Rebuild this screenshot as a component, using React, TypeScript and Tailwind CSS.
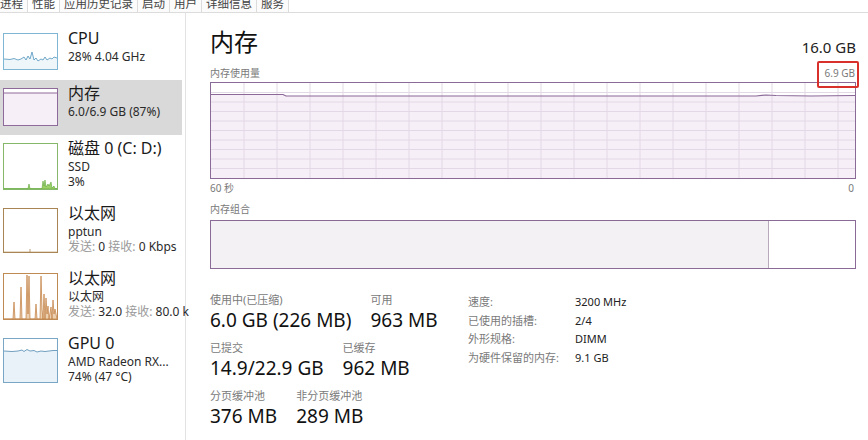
import type { ReactNode } from 'react'

const tabs = ['进程', '性能', '应用历史记录', '启动', '用户', '详细信息', '服务']

function Thumb({ h, border, children }: { h: number; border: string; children: ReactNode }) {
  return (
    <div className={`w-[55px] shrink-0 border ${border} bg-white`} style={{ height: h }}>
      <svg width="100%" height="100%" viewBox={`0 0 53 ${h - 2}`} preserveAspectRatio="none">
        {children}
      </svg>
    </div>
  )
}

function SideItem({
  height,
  thumb,
  title,
  lines,
  selected,
}: {
  height: number
  thumb: ReactNode
  title: string
  lines: ReactNode[]
  selected?: boolean
}) {
  return (
    <div
      className={`flex w-[182px] gap-[10px] pl-[3px] pt-[8px] ${selected ? 'bg-[#d9d9d9]' : ''}`}
      style={{ height }}
    >
      {thumb}
      <div className="-mt-[5px] min-w-0 whitespace-nowrap">
        <div className="text-[16px] leading-[21px] text-[#1a1a1a]">{title}</div>
        {lines.map((l, i) => (
          <div key={i} className="text-[12px] leading-[15px] text-[#2a2a2a]">
            {l}
          </div>
        ))}
      </div>
    </div>
  )
}

function MemGraph() {
  const cols = Array.from({ length: 20 }, (_, i) => (i + 1) * 33)
  const rows = Array.from({ length: 9 }, (_, i) => (i + 1) * 9.5)
  const line = 'M0 11.5 L72 11.5 L75 13 L545 13 L555 12 L565 12.5 L600 13 L644 12.5'
  return (
    <svg width="100%" height="100%" viewBox="0 0 644 95" preserveAspectRatio="none">
      <path d={`${line} L644 95 L0 95 Z`} fill="#f6eff7" />
      {cols.map((x) => (
        <line key={x} x1={x} y1={0} x2={x} y2={95} stroke="#e3d8e5" strokeWidth="1" />
      ))}
      {rows.map((y) => (
        <line key={y} x1={0} y1={y} x2={644} y2={y} stroke="#e3d8e5" strokeWidth="1" />
      ))}
      <path d={line} fill="none" stroke="#8b6898" strokeWidth="1.2" />
    </svg>
  )
}

export default function App() {
  return (
    <div className="relative h-[440px] w-[868px] overflow-hidden bg-white font-['Noto_Sans','Noto_Sans_CJK_SC',sans-serif] text-[#1a1a1a]">
      {/* tabs */}
      <div className="flex h-[13px] overflow-hidden border-b border-[#dcdcdc]">
        {tabs.map((t, i) => (
          <div
            key={t}
            className={`-mt-[4px] whitespace-nowrap border-r border-[#dcdcdc] px-[4px] text-[11.5px] leading-[16px] text-[#444] ${
              i === 0 ? 'pl-0' : ''
            } ${i === 1 ? 'bg-white' : 'bg-[#fbfbfb]'}`}
          >
            {t}
          </div>
        ))}
      </div>

      <div className="flex h-[427px]">
        {/* sidebar */}
        <div className="w-[186px] shrink-0 border-r border-[#e2e2e2] pt-[12px]">
          <SideItem
            height={55}
            title="CPU"
            lines={['28% 4.04 GHz']}
            thumb={
              <Thumb h={37} border="border-[#7fb6d3]">
                <path
                  d="M0 25 L6 25.5 L10 24.5 L14 26 L17 25 L20 23 L22 26 L24 22 L26 25 L28 18 L30 26 L32 24 L34 27 L37 25 L39 26 L41 23 L43 26 L46 24 L48 25 L50 23 L53 24 L53 35 L0 35 Z"
                  fill="#eef6fa"
                />
                <path
                  d="M0 25 L6 25.5 L10 24.5 L14 26 L17 25 L20 23 L22 26 L24 22 L26 25 L28 18 L30 26 L32 24 L34 27 L37 25 L39 26 L41 23 L43 26 L46 24 L48 25 L50 23 L53 24"
                  fill="none"
                  stroke="#4f94bd"
                  strokeWidth="0.8"
                />
              </Thumb>
            }
          />
          <SideItem
            height={55}
            selected
            title="内存"
            lines={['6.0/6.9 GB (87%)']}
            thumb={
              <Thumb h={38} border="border-[#8d6a9a]">
                <rect x="0" y="4" width="53" height="32" fill="#f7eff7" />
                <line x1="0" y1="4" x2="53" y2="4" stroke="#8d6a9a" strokeWidth="1" />
              </Thumb>
            }
          />
          <SideItem
            height={65}
            title="磁盘 0 (C: D:)"
            lines={['SSD', '3%']}
            thumb={
              <Thumb h={47} border="border-[#86b86a]">
                <path
                  d="M0 44.5 L24 44.5 L25 40 L26 44.5 L38 44.5 L39 37 L40 42 L41 36 L42 43 L44 40 L45 42 L47 38 L48 44 L50 42 L51 44.5 L53 44.5 L53 45 L0 45 Z"
                  fill="#9bd068"
                  stroke="#5ea63a"
                  strokeWidth="0.6"
                />
              </Thumb>
            }
          />
          <SideItem
            height={65}
            title="以太网"
            lines={[
              'pptun',
              <>
                <span className="text-[#9a9a9a]">发送:</span> 0 <span className="text-[#9a9a9a]">接收:</span> 0 Kbps
              </>,
            ]}
            thumb={
              <Thumb h={45} border="border-[#a98556]">
                <line x1="0" y1="42.5" x2="53" y2="42.5" stroke="#d9c5a8" strokeWidth="0.6" />
                <line x1="26" y1="40" x2="26" y2="43" stroke="#a98556" strokeWidth="0.8" />
              </Thumb>
            }
          />
          <SideItem
            height={65}
            title="以太网"
            lines={[
              '以太网',
              <>
                <span className="text-[#9a9a9a]">发送:</span> 32.0 <span className="text-[#9a9a9a]">接收:</span> 80.0 k
              </>,
            ]}
            thumb={
              <Thumb h={47} border="border-[#c08a55]">
                <path
                  d="M0 45 L9 45 L10 28 L11 45 L16 45 L17 13 L18 45 L22 45 L23 1 L24 40 L25 2 L26 45 L31 45 L32 30 L33 45 L36 45 L37 2 L38 35 L39 45 L40 20 L41 45 L42 24 L43 40 L44 32 L45 45 L47 33 L48 45 L49 26 L50 40 L51 35 L53 45 Z"
                  fill="#ecd0b2"
                  stroke="#c07b3c"
                  strokeWidth="0.7"
                />
              </Thumb>
            }
          />
          <SideItem
            height={65}
            title="GPU 0"
            lines={['AMD Radeon RX...', '74% (47 °C)']}
            thumb={
              <Thumb h={45} border="border-[#7aa6c6]">
                <path
                  d="M0 12 L8 12.5 L14 12 L18 11 L20 12.5 L23 10.5 L26 12 L30 11.5 L33 13 L37 12 L41 12.5 L45 12 L49 11.5 L53 11.5 L53 43 L0 43 Z"
                  fill="#e8f2f8"
                />
                <path
                  d="M0 12 L8 12.5 L14 12 L18 11 L20 12.5 L23 10.5 L26 12 L30 11.5 L33 13 L37 12 L41 12.5 L45 12 L49 11.5 L53 11.5"
                  fill="none"
                  stroke="#4f88b0"
                  strokeWidth="0.8"
                />
              </Thumb>
            }
          />
        </div>

        {/* main panel */}
        <div className="flex w-[646px] flex-col pl-[24px] pt-[11px]">
          <div className="flex h-[36px] w-[646px] items-end justify-between">
            <div className="text-[24px] leading-[36px] text-[#111]">内存</div>
            <div className="pb-[3px] text-[15px] leading-[20px] text-[#222]">16.0 GB</div>
          </div>

          <div className="flex h-[22px] w-[646px] items-end justify-between pb-[2px]">
            <div className="text-[10px] leading-[14px] text-[#7a7a7a]">内存使用量</div>
            <div className="relative mr-[1px] text-[10px] leading-[14px] text-[#7a7a7a]">
              6.9 GB
              <div className="absolute -bottom-[8px] -left-[8px] -right-[4px] -top-[5px] rounded-[2px] border-2 border-[#d8312c]" />
            </div>
          </div>

          <div className="h-[97px] w-[646px] border border-[#8a6a97]">
            <MemGraph />
          </div>

          <div className="mt-[2px] flex h-[14px] w-[646px] justify-between text-[10px] leading-[14px] text-[#7a7a7a]">
            <span>60 秒</span>
            <span className="mr-[2px]">0</span>
          </div>

          <div className="mt-[7px] text-[10px] leading-[14px] text-[#7a7a7a]">内存组合</div>

          <div className="mt-[4px] flex h-[49px] w-[646px] border border-[#8a6a97]">
            <div className="w-[558px] border-r border-[#b8a9bc] bg-[#f4f1f4]" />
            <div className="flex-1 bg-white" />
          </div>

          <div className="mt-[23px] flex items-start">
            <div className="w-[258px] shrink-0">
              <div className="flex gap-[19px]">
                <div>
                  <div className="text-[11px] leading-[15px] text-[#7a7a7a]">使用中(已压缩)</div>
                  <div className="text-[19px] leading-[26px] text-[#111]">6.0 GB (226 MB)</div>
                </div>
                <div>
                  <div className="text-[11px] leading-[15px] text-[#7a7a7a]">可用</div>
                  <div className="text-[19px] leading-[26px] text-[#111]">963 MB</div>
                </div>
              </div>
              <div className="mt-[7px] flex gap-[19px]">
                <div>
                  <div className="text-[11px] leading-[15px] text-[#7a7a7a]">已提交</div>
                  <div className="text-[19px] leading-[26px] text-[#111]">14.9/22.9 GB</div>
                </div>
                <div>
                  <div className="text-[11px] leading-[15px] text-[#7a7a7a]">已缓存</div>
                  <div className="text-[19px] leading-[26px] text-[#111]">962 MB</div>
                </div>
              </div>
              <div className="mt-[7px] flex gap-[19px]">
                <div>
                  <div className="text-[11px] leading-[15px] text-[#7a7a7a]">分页缓冲池</div>
                  <div className="text-[19px] leading-[26px] text-[#111]">376 MB</div>
                </div>
                <div>
                  <div className="text-[11px] leading-[15px] text-[#7a7a7a]">非分页缓冲池</div>
                  <div className="text-[19px] leading-[26px] text-[#111]">289 MB</div>
                </div>
              </div>
            </div>

            <div className="grid grid-cols-[107px_auto] content-start pt-[1px] text-[11px] leading-[18.5px]">
              <span className="text-[#7a7a7a]">速度:</span>
              <span className="text-[#222]">3200 MHz</span>
              <span className="text-[#7a7a7a]">已使用的插槽:</span>
              <span className="text-[#222]">2/4</span>
              <span className="text-[#7a7a7a]">外形规格:</span>
              <span className="text-[#222]">DIMM</span>
              <span className="text-[#7a7a7a]">为硬件保留的内存:</span>
              <span className="text-[#222]">9.1 GB</span>
            </div>
          </div>
        </div>
      </div>
    </div>
  )
}
